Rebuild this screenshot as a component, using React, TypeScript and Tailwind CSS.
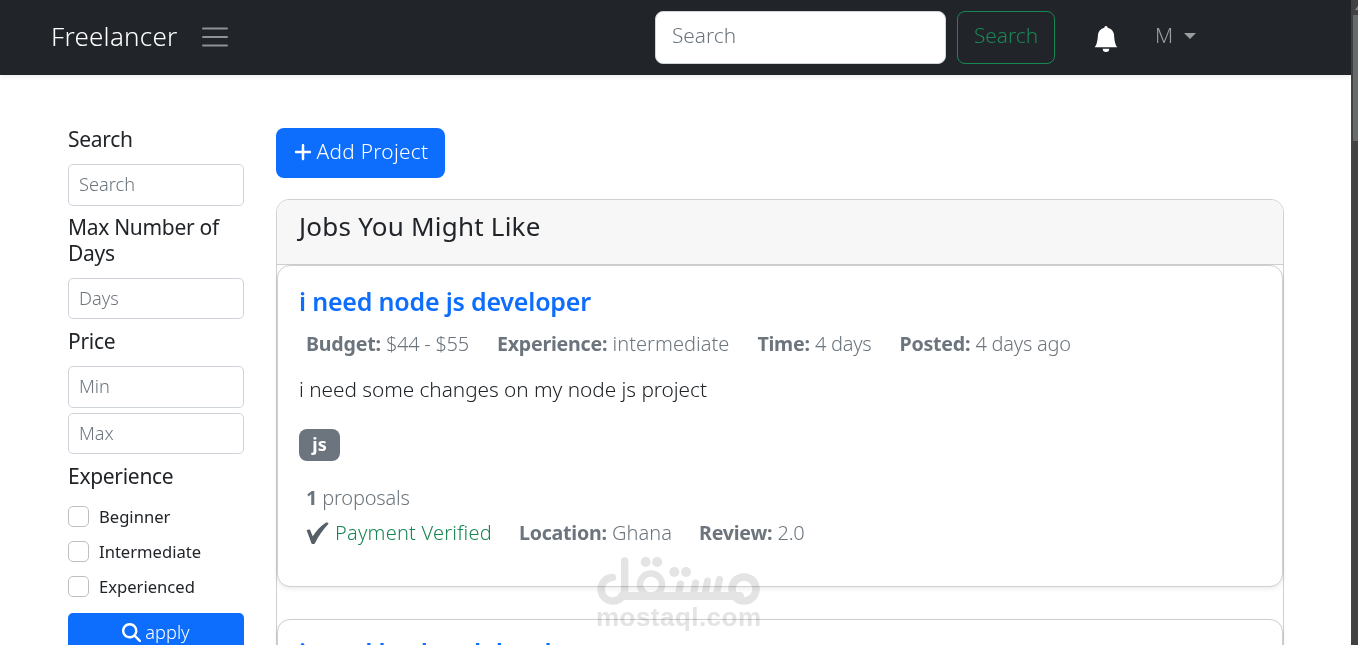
import { BsBellFill } from "react-icons/bs";
import { FaMagnifyingGlass, FaPlus } from "react-icons/fa6";

const levels = ["Beginner", "Intermediate", "Experienced"];

const jobs = [
  {
    title: "i need node js developer",
    details: [
      { label: "Budget:", value: "$44 - $55" },
      { label: "Experience:", value: "intermediate" },
      { label: "Time:", value: "4 days" },
      { label: "Posted:", value: "4 days ago" },
    ],
    description: "i need some changes on my node js project",
    skills: ["js"],
    proposals: 1,
    client: [
      { label: "Location:", value: "Ghana" },
      { label: "Review:", value: "2.0" },
    ],
  },
  {
    title: "i need backend developer",
    details: [],
    description: "",
    skills: [],
    proposals: 0,
    client: [],
  },
];

type Job = (typeof jobs)[number];

function Detail({ label, value }: { label: string; value: string }) {
  return (
    <span className="whitespace-nowrap">
      <span className="font-bold text-[19.6px] tracking-[-0.22px]">{label}</span>{" "}
      <span className={/\d/.test(value) ? "tracking-[-0.26px]" : "tracking-[0.04px]"}>
        {value}
      </span>
    </span>
  );
}

function FilterTitle({ children }: { children: string }) {
  return (
    <h5 className="text-[21px] leading-[26px] font-normal tracking-[-0.3px] mb-3">
      {children}
    </h5>
  );
}

function FilterInput({ placeholder, className }: { placeholder: string; className: string }) {
  return (
    <input
      placeholder={placeholder}
      className={`block w-full rounded-[5px] border border-[#ced4da] px-2.5 pb-0.5 text-[18.2px] font-light placeholder:text-[#6c757d] ${className}`}
    />
  );
}

function Navbar() {
  return (
    <nav className="relative flex h-[75px] shrink-0 items-start bg-[#212529] pl-[51px] shadow-[0_2px_5px_rgba(0,0,0,0.075)]">
      <span className="mt-[17px] w-[151px] text-[26px] leading-[39px] font-light tracking-[0.25px] text-white">
        Freelancer
      </span>
      <svg className="mt-6 h-[26px] w-[26px]" viewBox="0 0 26 26" fill="none">
        <path
          d="M1 4.5h24M1 13h24M1 21.5h24"
          stroke="#909294"
          strokeWidth="2"
          strokeLinecap="round"
        />
      </svg>
      <form className="mt-[11px] ml-[427px] flex gap-[11px]">
        <input
          placeholder="Search"
          className="h-[53px] w-[291px] rounded-lg border border-[#ced4da] bg-white px-4 pb-1.5 text-[20.8px] font-light placeholder:text-[#6c757d]"
        />
        <button
          type="button"
          className="h-[53px] w-[98px] rounded-lg border border-[#198754] pb-1 text-[20.8px] font-light text-[#198754]"
        >
          Search
        </button>
      </form>
      <BsBellFill className="mt-[26px] ml-[38px] text-white" size={26} />
      <div className="mt-5 ml-9 flex items-center gap-[11px] text-[20.8px] leading-[31px] font-light text-[#9b9d9f]">
        <span>M</span>
        <span className="border-x-[6px] border-t-[6px] border-x-transparent border-t-[#9b9d9f]" />
      </div>
    </nav>
  );
}

function Filters() {
  return (
    <aside className="mt-[51px] w-44 shrink-0">
      <FilterTitle>Search</FilterTitle>
      <FilterInput placeholder="Search" className="h-[42px] mb-2" />
      <FilterTitle>Max Number of Days</FilterTitle>
      <FilterInput placeholder="Days" className="h-[41px] mb-[9px]" />
      <FilterTitle>Price</FilterTitle>
      <FilterInput placeholder="Min" className="h-[42px] mb-[5px]" />
      <FilterInput placeholder="Max" className="h-[41px] mb-[9px]" />
      <FilterTitle>Experience</FilterTitle>
      <div className="mt-[17px] mb-4 flex flex-col gap-3.5">
        {levels.map((level) => (
          <label key={level} className="flex h-[21px] items-center gap-2.5">
            <input
              type="checkbox"
              className="h-[21px] w-[21px] appearance-none rounded-[5px] border border-[#bfbfbf]"
            />
            <span className="text-[16.6px] leading-[21px]">{level}</span>
          </label>
        ))}
      </div>
      <button className="flex h-[42px] w-full items-center justify-center gap-1 rounded-[5px] bg-[#0d6efd] pb-[3px] text-[18.2px] font-light text-white">
        <FaMagnifyingGlass size={19} />
        apply
      </button>
    </aside>
  );
}

function JobCard({ job }: { job: Job }) {
  return (
    <div className="h-[322px] shrink-0 rounded-[13px] border border-[#cfcfcf] bg-white px-[21px] pt-[18px] shadow-[0_2px_5px_rgba(0,0,0,0.075)] last:pt-[15px]">
      <h4 className="text-[25px] leading-[34px] font-semibold tracking-[-0.2px] text-[#0d6efd]">
        {job.title}
      </h4>
      {job.description && (
        <>
          <div className="mt-[11px] ml-[7px] flex gap-7 text-[20px] leading-[30px] font-light text-[#6c757d]">
            {job.details.map((item) => (
              <Detail key={item.label} {...item} />
            ))}
          </div>
          <p className="mt-[15px] text-[20.8px] leading-[31px] font-light tracking-[-0.04px]">
            {job.description}
          </p>
          <div className="mt-6 flex gap-2">
            {job.skills.map((skill) => (
              <span
                key={skill}
                className="flex h-8 w-[41px] items-center justify-center rounded-lg bg-[#6c757d] pb-0.5 text-[18px] font-bold text-white"
              >
                {skill}
              </span>
            ))}
          </div>
          <div className="mt-[22px] ml-[7px] text-[20px] leading-[30px] font-light tracking-[-0.2px] text-[#6c757d]">
            <span className="font-bold">{job.proposals}</span> proposals
          </div>
          <div className="mt-[5px] ml-[7px] flex gap-[27px] text-[20px] leading-[30px] font-light text-[#6c757d]">
            <span className="flex items-center gap-1.5 tracking-[0.22px] whitespace-nowrap text-[#198754]">
              <svg className="h-[23px] w-[23px]" viewBox="0 0 23 23">
                <path
                  d="M.6 8.2c1-.9 2.5-1 3.5-.5.9 2.3 1.7 4.5 2.7 6.6C10 9 14.5 4 19.8.7c1-.4 2.5.1 2.7 1C17 7.5 12.6 14 8.8 21.4c-.8.8-2.6.8-3.3 0C4 17 2.2 12.5.6 8.2z"
                  fill="#565e68"
                />
              </svg>
              Payment Verified
            </span>
            {job.client.map((item) => (
              <Detail key={item.label} {...item} />
            ))}
          </div>
        </>
      )}
    </div>
  );
}

function Watermark() {
  return (
    <div className="pointer-events-none absolute top-[555px] left-[595px] mix-blend-multiply">
      <svg width="168" height="80" viewBox="595 555 168 80" fill="none">
        <g stroke="#e4e4e4" strokeLinecap="round">
          <circle cx="744" cy="589" r="12" strokeWidth="7.5" />
          <circle cx="651" cy="584.5" r="11" strokeWidth="6.5" />
          <path d="M612.5 577.5a11.8 11.8 0 1 0 12.2 11.5V561" strokeWidth="7.5" />
          <path d="M622 596h118" strokeWidth="8" />
          <path d="M680.5 584l-2 10M695.5 583l-2 11M707.5 581l-2.5 13M719.5 579.5l-3 14.5" strokeWidth="7" />
        </g>
        <g fill="#e4e4e4">
          <circle cx="645.7" cy="562" r="5" />
          <circle cx="657.2" cy="562" r="5" />
          <circle cx="674.3" cy="572" r="5" />
          <circle cx="686" cy="572" r="5" />
        </g>
        <text
          x="596"
          y="626"
          fill="#e4e4e4"
          fontFamily="Liberation Sans, sans-serif"
          fontWeight="700"
          fontSize="26"
          textLength="165"
        >
          mostaql.com
        </text>
      </svg>
    </div>
  );
}

export default function App() {
  return (
    <div className="relative flex h-[645px] w-[1358px] overflow-hidden bg-white font-['Noto_Sans',sans-serif] text-[#212529]">
      <div className="flex w-[1351px] flex-col">
        <Navbar />
        <div className="flex gap-8 pl-[68px]">
          <Filters />
          <main className="mt-[53px] w-[1008px]">
            <button className="flex h-[50px] w-[169px] items-center justify-center gap-1 rounded-lg bg-[#0d6efd] pb-0.5 text-[20.8px] font-light tracking-[0.3px] text-white">
              <FaPlus size={20} />
              Add Project
            </button>
            <section className="mt-[21px] rounded-t-[13px] border border-[#cfcfcf]">
              <div className="h-[65px] rounded-t-[12px] border-b border-[#cfcfcf] bg-[#f7f7f7] px-[22px] pt-[9px]">
                <h3 className="text-[26px] leading-[34px] tracking-[0.22px]">Jobs You Might Like</h3>
              </div>
              <div className="flex flex-col gap-8">
                {jobs.map((job) => (
                  <JobCard key={job.title} job={job} />
                ))}
              </div>
            </section>
          </main>
        </div>
      </div>

      {/* Scrollbar */}
      <div className="flex w-[7px] flex-col bg-[#424242] pl-0.5">
        <svg className="h-[15px] w-[5px]" viewBox="0 0 5 15">
          <path d="M5 6L2 10h3z" fill="#8b8b8b" />
        </svg>
        <div className="h-[126px] bg-[#666c6b]" />
      </div>

      <Watermark />
    </div>
  );
}
